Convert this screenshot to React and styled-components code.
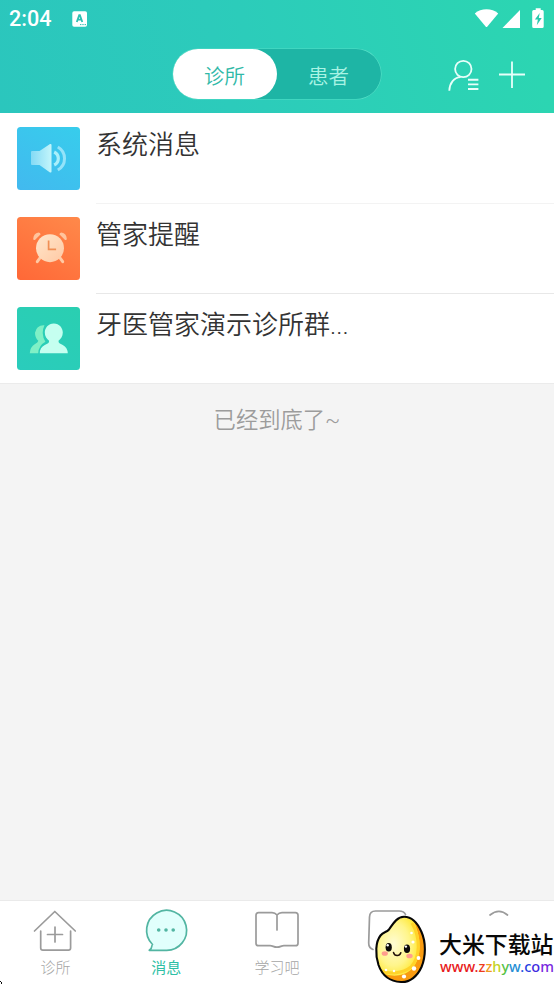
import React from "react";
import styled, { createGlobalStyle } from "styled-components";

const GlobalStyle = createGlobalStyle`
  * { box-sizing: border-box; }
  html, body { margin: 0; padding: 0; }
  body { font-family: Roboto, "Noto Sans CJK SC", sans-serif; background: #f4f4f4; overflow: hidden; }
  svg { display: block; }
`;

const Screen = styled.div`
  position: relative;
  display: flex;
  flex-direction: column;
  width: 554px;
  height: 984px;
  background: #f4f4f4;
`;

const Header = styled.header`
  height: 113px;
  background: linear-gradient(75deg, #2bc6bd 0%, #2ccbbb 40%, #2cd6b1 100%);
`;

const StatusBar = styled.div`
  display: flex;
  align-items: center;
  height: 38px;
  padding: 0 8px 0 9px;
  color: #fff;
`;

const Clock = styled.span`
  width: 63px;
  font: 500 21.6px/40px Roboto, sans-serif;
`;

const StatusIcons = styled.div`
  margin-left: auto;
`;

const TitleBar = styled.div`
  display: grid;
  grid-template-columns: 173px 208px 1fr;
  height: 75px;
  padding-top: 11px;
`;

const Segmented = styled.div`
  grid-column: 2;
  display: flex;
  height: 50px;
  border-radius: 25px;
  background: #1eb5a5;
  box-shadow: 0 0 0 0.6px rgba(100, 230, 205, 0.75);
`;

const Segment = styled.button`
  flex: 1;
  padding: 0 1px 0 0;
  border: 0;
  border-radius: 25px;
  font: 350 20.5px/52px "Noto Sans CJK SC", sans-serif;
  color: ${(p) => (p.$active ? "#2fb9a7" : "#a9f3e4")};
  background: ${(p) => (p.$active ? "#fff" : "transparent")};
`;

const Actions = styled.div`
  display: flex;
  gap: 18px;
  padding-left: 66px;
`;

const List = styled.ul`
  margin: 0;
  padding: 0;
  list-style: none;
  height: 270.5px;
  background: #fff;
  border-bottom: 1px solid #ebebeb;
`;

const Row = styled.li`
  display: flex;
  gap: 16px;
  height: 90.2px;
  padding-left: 17px;
`;

const Tile = styled.div`
  width: 63px;
  height: 63px;
  margin-top: 14px;
  border-radius: 3.5px;
  background: ${(p) => p.$fill};
`;

const RowBody = styled.div`
  flex: 1;
  height: 91px;
  border-bottom: ${(p) => (p.$last ? "0" : `1px solid ${p.$line}`)};
`;

const RowTitle = styled.div`
  margin-top: 12px;
  font-size: 26px;
  line-height: 40px;
  font-weight: 350;
  color: #333;
  white-space: nowrap;
`;

const EndNote = styled.div`
  flex: 1;
  padding-top: 19px;
  text-align: center;
  font-size: 22.3px;
  line-height: 34px;
  font-weight: 350;
  color: #9c9c9c;
`;

const TabBar = styled.nav`
  display: grid;
  grid-template-columns: repeat(5, 1fr);
  height: 84px;
  background: #fff;
  border-top: 1px solid #eaeaea;
`;

const Tab = styled.div`
  display: flex;
  flex-direction: column;
  align-items: center;
  padding-top: 5px;
  color: ${(p) => (p.$active ? "#2ebfa5" : "#9b9b9b")};
`;

const TabLabel = styled.span`
  font-size: 15px;
  line-height: 28px;
  font-weight: ${(p) => (p.$active ? 400 : 300)};
  color: ${(p) => (p.$active ? "#2ebfa5" : "#a5a5a5")};
`;

const Watermark = styled.div`
  position: absolute;
  left: 374px;
  top: 914px;
  display: flex;
  gap: 12px;
`;

const BrandText = styled.div`
  width: 115px;
  padding-top: 16px;
  white-space: nowrap;
`;

const BrandName = styled.div`
  font: 500 22.9px/26px "Noto Sans CJK SC", sans-serif;
  color: #080808;
`;

const BrandUrl = styled.div`
  padding-left: 1px;
  font: 500 14.5px/20px "Noto Sans", sans-serif;
`;

const Letter = styled.span`
  color: ${(p) => p.$tone};
`;

const CornerMark = styled.div`
  position: absolute;
  left: 0;
  top: 981px;
`;

function KeyboardBadge() {
  return (
    <svg width="16" height="17" viewBox="0 0 16 17">
      <rect x="0.3" y="0.2" width="14.7" height="15.6" rx="1.8" fill="#fff" />
      <path d="M4.800 11 7.200 4.200h.7l2.400 6.800M5.700 8.700h3.700" fill="none" stroke="#2dbfb3" strokeWidth="1.800" />
      <path d="M8 13.600h1.400M10.300 13.600h1.400M12.600 13.600H14" stroke="#2dbfb3" strokeWidth="1" />
    </svg>
  );
}

function SystemIcons() {
  return (
    <svg width="72" height="22" viewBox="0 0 72 22" fill="#fff">
      <path d="M.8 5.500C7-.1 18-.1 24.200 5.500L13.400 18.400q-.9 1-1.800 0Z" />
      <path d="M46 2v18H28.500Z" />
      <path d="M59.700 2h2V.3h5V2h1.500q1.500 0 1.500 1.500V18.500q0 1.500-1.500 1.500h-8.500q-1.500 0-1.500-1.500V3.500q0-1.500 1.500-1.500Z" />
      <path d="m65.700 5-4.800 6.400h3L62.800 17.300l4.900-7.200h-2.900Z" fill="#27c9ad" />
    </svg>
  );
}

function ContactIcon() {
  return (
    <svg width="32" height="52" viewBox="0 0 32 52" fill="none" stroke="#e7fffa" strokeWidth="1.800">
      <circle cx="16.300" cy="20" r="8.200" />
      <path d="M2.300 41.700C2.600 34 7 28.400 13.500 28.100" />
      <path d="M21 30.800h10.400M21 35.400h10.400M21 40h10.400" strokeWidth="1.900" />
    </svg>
  );
}

function PlusIcon() {
  return (
    <svg width="30" height="52" viewBox="0 0 30 52" fill="none" stroke="#e7fffa" strokeWidth="1.800">
      <path d="M2 25.500h26M15 12.500v26.500" />
    </svg>
  );
}

function SpeakerIcon() {
  return (
    <svg width="63" height="63" viewBox="0 0 63 63">
      <defs>
        <linearGradient id="horn">
          <stop stopColor="#83daf5" />
          <stop offset="1" stopColor="#c3f5fb" />
        </linearGradient>
      </defs>
      <path d="M15 24h7.500L33 17q1.500-.5 1.500 1v26.500q0 1.600-1.500.9L22.500 38H15q-1 0-1-1V25q0-1 1-1Z" fill="url(#horn)" />
      <path d="M37.200 25a7.200 7.200 0 0 1 0 13" fill="none" stroke="#a9effb" strokeWidth="3.200" />
      <path d="M40.800 20a13.200 13.200 0 0 1 0 23" fill="none" stroke="#94e3f9" strokeWidth="3" />
    </svg>
  );
}

function AlarmIcon() {
  return (
    <svg width="63" height="63" viewBox="0 0 63 63">
      <defs>
        <linearGradient id="dial" x1="0" x2="1" y1="0" y2="1">
          <stop stopColor="#ffe6cb" />
          <stop offset="1" stopColor="#ffc9a4" />
        </linearGradient>
      </defs>
      <path d="m24 39.500-3.700 5.200M42 39.500l3.700 5.200" stroke="#ffc9a4" strokeWidth="3" strokeLinecap="round" />
      <circle cx="33" cy="31.200" r="14" fill="url(#dial)" />
      <path d="M16.200 22q.3-5.800 5.300-6.600 1.500 0 2.200 1.800l-5.500 5.600q-1.800.8-2-.8ZM49.800 22q-.3-5.800-5.300-6.600-1.500 0-2.200 1.800l5.500 5.600q1.800.8 2-.8Z" fill="#ffc49d" />
      <path d="M31.600 23.500v8.800h7.500" fill="none" stroke="#f08f55" strokeWidth="1.700" />
    </svg>
  );
}

function GroupIcon() {
  return (
    <svg width="63" height="63" viewBox="0 0 63 63">
      <path d="M27.500 18.300q-8-.5-9.500 7.500 0 5.200 3.300 8-.3 2-3.300 3.200-5 3-5.200 9.300h8.400q.5-8 7.200-11.500-5-8.500-.9-16.500Z" fill="#7ff0c6" />
      <path d="M36.800 16.500c-5.600 0-9 4.400-9 9 0 4 2.100 6.500 4.300 8.300.2 2.200-1.400 2.900-4.300 4.200q-5 2.500-5 8.300h28q-.3-5.800-5-8.300c-2.900-1.300-4.500-2-4.300-4.200 2.200-1.800 4.300-4.300 4.300-8.300 0-4.600-3.400-9-9-9Z" fill="#c5fff0" />
    </svg>
  );
}

const tabShapes = {
  clinic: (
    <>
      <path d="M3.500 25 23.800 5.500 44.300 25M9.700 25v17q0 2.200 2.200 2.200h25.500q2.200 0 2.200-2.200V25" />
      <path d="M16.500 28.500h15M24 21v15" />
    </>
  ),
  message: (
    <>
      <path d="M10.500 38.500A20 20 0 1 1 24 44.300H7.300Q9.800 42.500 10 39.500" fill="#e1fffc" stroke="#52b5a2" />
      <path d="M16.700 24h.02M24 24h.02M31.200 24h.02" stroke="#52b5a2" strokeWidth="3.600" />
    </>
  ),
  study: (
    <path d="M24 9q-2-2.300-5-2.300H5.500Q3 6.700 3 9.200v28q0 2.500 2.500 2.500H17c3 0 3.500 1.500 7 1.500s4-1.500 7-1.500h11.500q2.500 0 2.500-2.500v-28q0-2.500-2.500-2.500H29Q26 6.700 24 9v15" />
  ),
  tools: <path d="M9 43.500Q4.700 42 4.700 37L5.500 11q.2-6 6-6H35q5 0 6.500 3.500" />,
  profile: <path d="M15 9q9-7.400 17.500 0" />,
};

function TabIcon({ name }) {
  return (
    <svg width="48" height="48" viewBox="0 0 48 48" fill="none" stroke="currentColor" strokeWidth="1.700" strokeLinecap="round" strokeLinejoin="round">
      {tabShapes[name]}
    </svg>
  );
}

const grainOutline =
  "M15 15.500C19 10 22.500 3 30 2.800 38 2.700 44 10 47.500 18 52 28 52 42 47.500 53 43.500 62 36 68.500 27 68 16 67.500 8 61 4.500 51 1 40 1.500 28 6.500 21.500 9.500 17.500 12.500 18.500 15 15.500Z";

function RiceMascot() {
  return (
    <svg width="53" height="70" viewBox="0 0 53 70">
      <defs>
        <radialGradient id="grain" cx=".36" cy=".42" r=".66">
          <stop stopColor="#fffcd4" />
          <stop offset=".5" stopColor="#fff58a" />
          <stop offset=".8" stopColor="#ffe835" />
          <stop offset="1" stopColor="#ffca18" />
        </radialGradient>
        <clipPath id="grainClip"><path d={grainOutline} /></clipPath>
      </defs>
      <path d={grainOutline} fill="url(#grain)" />
      <g clipPath="url(#grainClip)">
        <path d="M39 5C48 24 48 44 38 55 28 64 14 63 4 57l10 13h39V8Z" fill="#f99b10" />
        <path d="M38 9C47 25 46 43 37 53 28 60 16 60 7 57" fill="none" stroke="#ffd329" strokeWidth="3" />
      </g>
      <path d={grainOutline} fill="none" stroke="#060606" strokeWidth="2.100" />
      <g fill="#0c0909">
        <ellipse cx="14.700" cy="33.300" rx="3.100" ry="4.300" />
        <ellipse cx="33" cy="34.700" rx="3.100" ry="4.300" />
      </g>
      <g fill="#fff">
        <circle cx="13.700" cy="31.200" r="1.200" />
        <circle cx="31.900" cy="32.600" r="1.200" />
        <circle cx="37.500" cy="19" r="1.300" />
        <circle cx="39" cy="28" r="1.600" />
        <circle cx="44.500" cy="44" r="1.900" />
        <circle cx="40" cy="54.500" r="2.200" />
        <circle cx="30" cy="62.500" r="2.100" />
        <circle cx="12" cy="56" r="1.300" />
        <circle cx="20" cy="57" r="1.200" />
      </g>
      <path d="M19.500 38.500c1.200 4 6 4.200 7.300.3" fill="none" stroke="#211008" strokeWidth="1.500" strokeLinecap="round" />
      <g fill="#ff9d8d">
        <ellipse cx="10.800" cy="39.500" rx="3.100" ry="2.300" />
        <ellipse cx="35.500" cy="42" rx="3.200" ry="2.300" />
      </g>
    </svg>
  );
}

const rows = [
  { title: "系统消息", line: "#f3f3f3", fill: "linear-gradient(30deg, #42b9ef, #37cdec)", icon: <SpeakerIcon /> },
  { title: "管家提醒", line: "#e8e8e8", fill: "linear-gradient(30deg, #ff6837, #ff894a)", icon: <AlarmIcon /> },
  { title: "牙医管家演示诊所群...", fill: "linear-gradient(30deg, #2accbc, #2acfb1)", icon: <GroupIcon /> },
];

const tabs = [
  { name: "clinic", label: "诊所" },
  { name: "message", label: "消息", active: true },
  { name: "study", label: "学习吧" },
  { name: "tools" },
  { name: "profile" },
];

const urlLetters = [
  ["www.", "#e81a20"],
  ["z", "#ed3c1d"],
  ["z", "#f29a20"],
  ["h", "#c4d322"],
  ["y", "#55c244"],
  ["w", "#288fd5"],
  [".", "#2756df"],
  ["c", "#263ee1"],
  ["o", "#3f2bdf"],
  ["m", "#7a29e0"],
];

export default function App() {
  return (
    <Screen>
      <GlobalStyle />
      <Header>
        <StatusBar>
          <Clock>2:04</Clock>
          <KeyboardBadge />
          <StatusIcons><SystemIcons /></StatusIcons>
        </StatusBar>
        <TitleBar>
          <Segmented>
            <Segment $active>诊所</Segment>
            <Segment>患者</Segment>
          </Segmented>
          <Actions>
            <ContactIcon />
            <PlusIcon />
          </Actions>
        </TitleBar>
      </Header>
      <List>
        {rows.map((row, i) => (
          <Row key={row.title}>
            <Tile $fill={row.fill}>{row.icon}</Tile>
            <RowBody $line={row.line} $last={i === rows.length - 1}>
              <RowTitle>{row.title}</RowTitle>
            </RowBody>
          </Row>
        ))}
      </List>
      <EndNote>已经到底了~</EndNote>
      <TabBar>
        {tabs.map((tab) => (
          <Tab key={tab.name} $active={tab.active}>
            <TabIcon name={tab.name} />
            {tab.label && <TabLabel $active={tab.active}>{tab.label}</TabLabel>}
          </Tab>
        ))}
      </TabBar>
      <Watermark>
        <RiceMascot />
        <BrandText>
          <BrandName>大米下载站</BrandName>
          <BrandUrl>
            {urlLetters.map(([text, tone], i) => (
              <Letter key={i} $tone={tone}>{text}</Letter>
            ))}
          </BrandUrl>
        </BrandText>
      </Watermark>
      <CornerMark>
        <svg width="3" height="3"><path d="M0 0h1v1H0ZM1 1h1v2H1Z" fill="#111" /></svg>
      </CornerMark>
    </Screen>
  );
}
